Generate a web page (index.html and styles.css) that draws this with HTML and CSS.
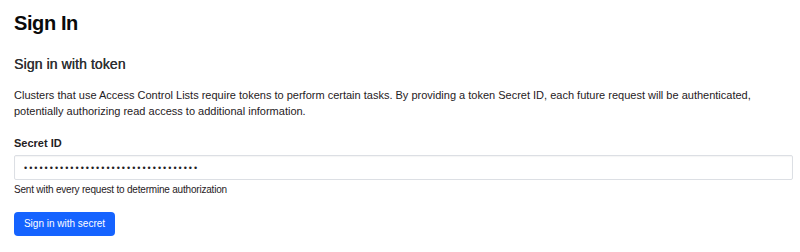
FILE: index.html
```html
<!DOCTYPE html>
<html lang="en">
<head>
<meta charset="utf-8">
<title>Sign In</title>
<link rel="stylesheet" href="styles.css">
</head>
<body>
<main class="page">
  <h1 class="title">Sign In</h1>
  <h2 class="subtitle">Sign in with token</h2>
  <p class="intro">Clusters that use Access Control Lists require tokens to perform certain tasks. By providing a token Secret ID, each future request will be authenticated, potentially authorizing read access to additional information.</p>
  <form class="form">
    <label class="label" for="secret">Secret ID</label>
    <input class="input" id="secret" type="password" value="xxxxxxxxxxxxxxxxxxxxxxxxxxxxxxxxxx">
    <p class="help">Sent with every request to determine authorization</p>
    <button class="button" type="button">Sign in with secret</button>
  </form>
</main>
</body>
</html>
```
FILE: styles.css
```css
html, body {
  margin: 0;
  padding: 0;
  background: #ffffff;
}
body {
  font-family: "Liberation Sans", Arial, sans-serif;
  color: #0a0a0a;
}
.page {
  padding: 11px 7px 0 14px;
  display: flex;
  flex-direction: column;
}
.title {
  margin: 0;
  font-size: 20px;
  line-height: 24px;
  font-weight: 700;
  letter-spacing: -0.4px;
  color: #0a0a0a;
}
.subtitle {
  margin: 20px 0 0;
  font-size: 14px;
  line-height: 18px;
  font-weight: 400;
  color: #2e3033;
  text-shadow: 0.35px 0 0 #2e3033;
  letter-spacing: 0.1px;
}
.intro {
  margin: 14px 0 0;
  font-size: 11px;
  line-height: 16px;
  letter-spacing: 0;
  color: #1f2124;
}
.form {
  display: flex;
  flex-direction: column;
  align-items: flex-start;
  margin-top: 16px;
}
.label {
  font-size: 11px;
  line-height: 16px;
  font-weight: 700;
  color: #1f2124;
}
.input {
  box-sizing: border-box;
  width: 100%;
  height: 25px;
  margin-top: 4px;
  padding: 0 9px;
  border: 1px solid #dcdfe4;
  border-radius: 2px;
  box-shadow: inset 0 1px 1px rgba(0,0,0,0.04);
  font-family: "Liberation Sans", Arial, sans-serif;
  font-size: 9px;
  letter-spacing: 2px;
  color: #1f2124;
  background: #fff;
  outline: none;
}
.help {
  margin: 3px 0 0;
  font-size: 10px;
  line-height: 14px;
  letter-spacing: -0.2px;
  color: #1f2124;
}
.button {
  margin-top: 15px;
  width: 101px;
  height: 24px;
  padding: 0;
  border: 0;
  border-radius: 4px;
  background: #1563ff;
  color: #ffffff;
  font-family: "Liberation Sans", Arial, sans-serif;
  font-size: 10px;
  line-height: 24px;
}
```
